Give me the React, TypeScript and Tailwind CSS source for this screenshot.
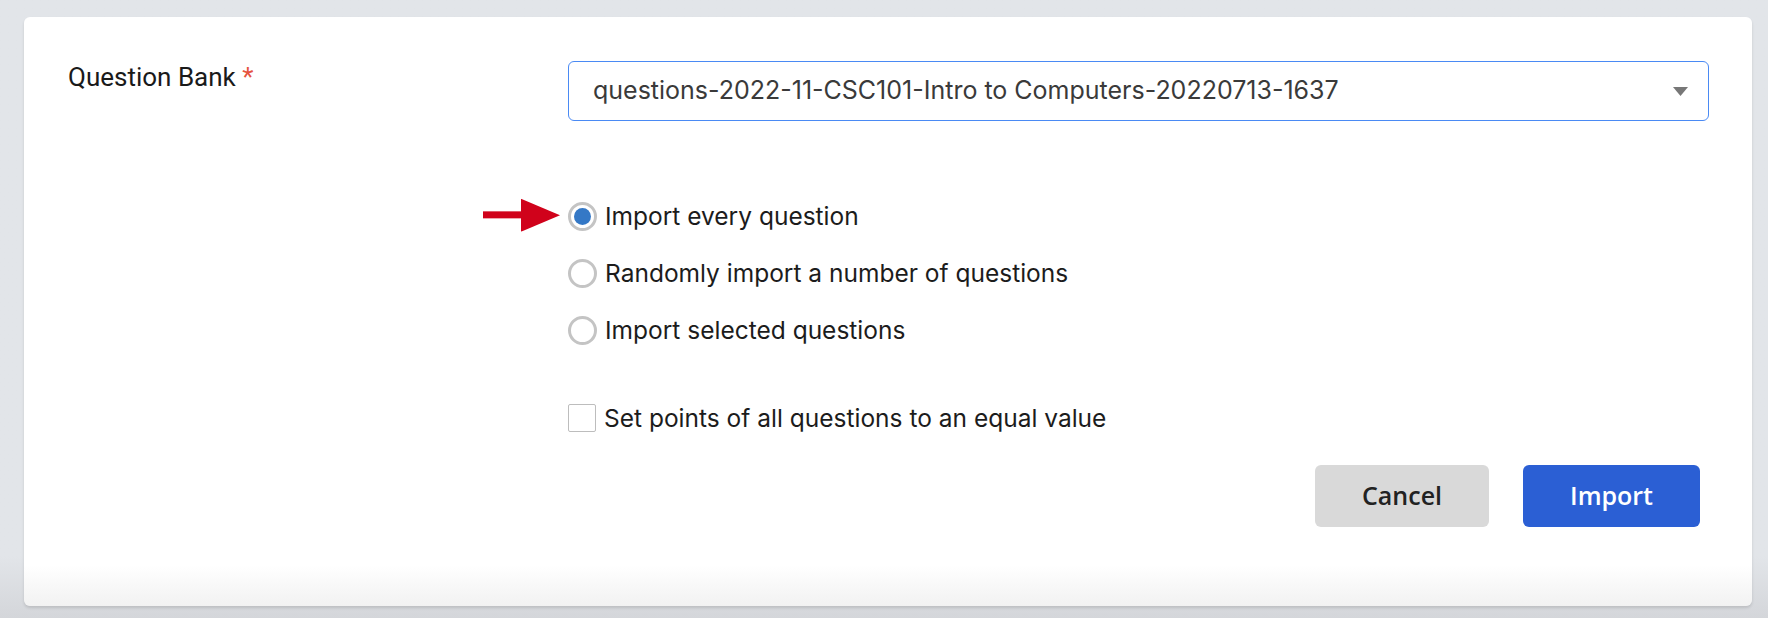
import { useState } from "react"

const options = [
  "Import every question",
  "Randomly import a number of questions",
  "Import selected questions",
]

function PointerArrow() {
  return (
    <svg
      className="absolute left-[-85px] top-1/2 -translate-y-[55%]"
      width="78"
      height="33"
      viewBox="0 0 78 33"
      xmlns="http://www.w3.org/2000/svg"
    >
      <rect x="0" y="12.5" width="40" height="7" fill="#d0021b" />
      <polygon points="38,0 77,16.5 38,33" fill="#d0021b" />
    </svg>
  )
}

export default function App() {
  const [selected, setSelected] = useState(0)
  const [equalPoints, setEqualPoints] = useState(false)

  return (
    <div className="min-h-screen bg-gradient-to-b from-[#e2e5e9] from-90% to-[#d4d6da] pl-[24px] pr-[16px] pt-[17px] pb-[12px] font-['Roboto',sans-serif]">
      <div className="rounded-[6px] bg-gradient-to-b from-white from-[93%] to-[#f2f2f2] pt-[44px] pl-[44px] pr-[43px] pb-[79px] shadow-[0_2px_3px_rgba(0,0,0,0.12)]">
        <div className="flex">
          <label className="w-[500px] pt-[1px] text-[26px] leading-[30px] text-[#1a1a1a]">
            Question Bank <span className="text-[#e5533f]">*</span>
          </label>
          <button className="flex h-[60px] flex-1 items-center justify-between rounded-[6px] border border-[#4a8af4] bg-white pl-[24px] pr-[20px] text-left">
            <span className="font-['Inter',sans-serif] text-[25px] text-[#3a3a3a]">
              questions-2022-11-CSC101-Intro to Computers-20220713-1637
            </span>
            <svg width="15" height="9" viewBox="0 0 15 9" xmlns="http://www.w3.org/2000/svg">
              <polygon points="0,0 15,0 7.5,9" fill="#777777" />
            </svg>
          </button>
        </div>

        <div className="ml-[500px] mt-[67px] font-['Inter',sans-serif] text-[#1c1c1c]">
          {options.map((option, i) => (
            <div
              key={option}
              className="relative flex h-[57px] cursor-pointer items-center gap-[8px]"
              onClick={() => setSelected(i)}
            >
              {i === 0 && <PointerArrow />}
              <span className="flex size-[29px] items-center justify-center rounded-full border-[3px] border-[#c4c4c4] bg-white">
                {selected === i && <span className="size-[17px] rounded-full bg-[#3478c6]"></span>}
              </span>
              <span className="text-[24.5px]">{option}</span>
            </div>
          ))}

          <div
            className="mt-[39px] flex h-[40px] cursor-pointer items-center gap-[8px]"
            onClick={() => setEqualPoints(!equalPoints)}
          >
            <span className="flex size-[28px] items-center justify-center rounded-[2px] border-[1.5px] border-[#bdbdbd] bg-white text-[#3478c6]">
              {equalPoints && "✓"}
            </span>
            <span className="text-[24.5px]">Set points of all questions to an equal value</span>
          </div>
        </div>

        <div className="mt-[27px] flex justify-end gap-[34px] pr-[9px] font-['Open_Sans',sans-serif] text-[25px] font-[550]">
          <button className="h-[62px] w-[174px] rounded-[6px] bg-[#d9d9d9] text-[#222222]">Cancel</button>
          <button className="h-[62px] w-[177px] rounded-[6px] bg-[#2b5fd4] text-white">Import</button>
        </div>
      </div>
    </div>
  )
}
